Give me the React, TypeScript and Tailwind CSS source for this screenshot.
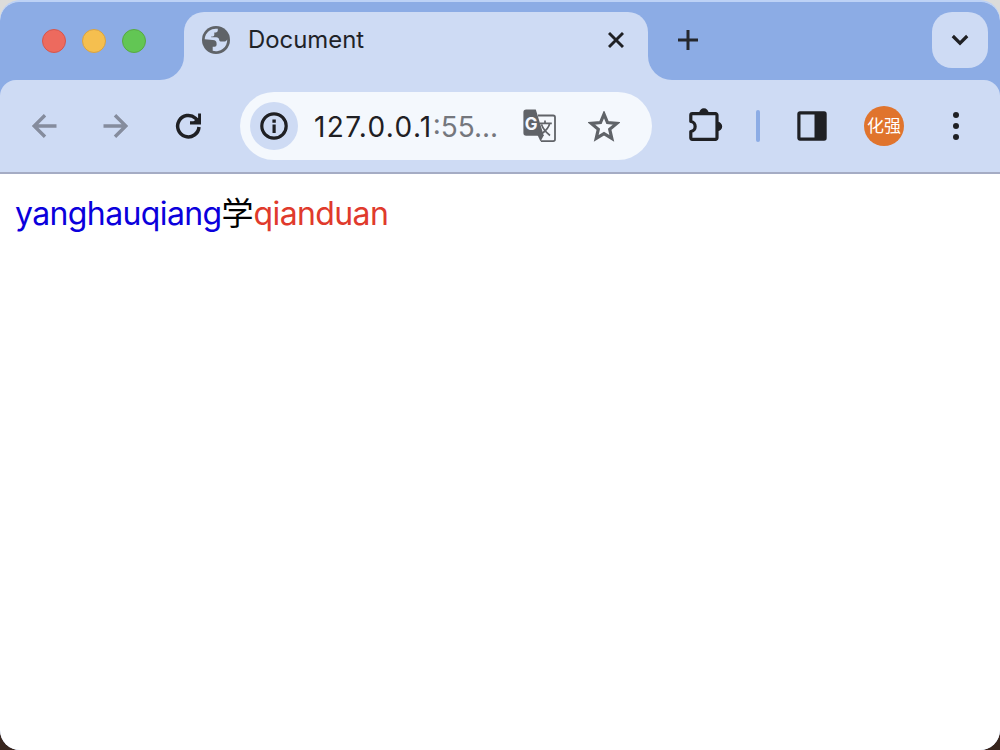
import React from "react";

const GlobeIcon = () => (
  <svg width="28" height="28" viewBox="0 0 28 28">
    <circle cx="14" cy="14" r="14" fill="#5f6368" />
    <path
      d="M2.700 13.200A11.300 11.300 0 0 1 15.800 2.800V4.600a1.800 1.800 0 0 1-1.800 1.800H12.300V9a1.400 1.400 0 0 1-1.400 1.400H9.200v.8H14.200c1.800 0 2.800 1 3 2.800.2 1 1 1.600 2.200 1.600h2.200c1.600 0 2.800-.7 3.600-2.200A11.300 11.300 0 0 1 10.700 24.800V20.800H12.600a2 2 0 0 0 2-2V17.700a3.700 3.700 0 0 0-3.700-3.700z"
      fill="#cfdcf5"
    />
  </svg>
);

const TrafficLights = () => (
  <div className="flex gap-4">
    <span className="size-6 rounded-full border border-[#d5564c] bg-[#ed6a5e]" />
    <span className="size-6 rounded-full border border-[#d8a243] bg-[#f5bf4f]" />
    <span className="size-6 rounded-full border border-[#58a942] bg-[#62c654]" />
  </div>
);

const TabStrip = () => (
  <div className="flex h-[78px] shrink-0 bg-[#cedbf4]">
    <div className="flex w-[184px] items-center rounded-br-3xl bg-[#8cace5] pl-[42px]">
      <TrafficLights />
    </div>
    <div className="w-[464px] bg-[#8cace5] pt-2.5">
      <div className="flex h-full items-start rounded-t-[20px] bg-[#cedbf4] pt-3.5 pr-6 pl-[18px]">
        <GlobeIcon />
        <span className="ml-[18px] text-[23.9px] leading-7 text-[#1f2328]">Document</span>
        <svg className="ml-auto mt-1.5" width="16" height="16" viewBox="0 0 16 16" stroke="#1f2024" strokeWidth="2.9">
          <path d="M1 1l14 14M15 1L1 15" />
        </svg>
      </div>
    </div>
    <div className="flex flex-1 items-start rounded-bl-3xl bg-[#8cace5] pt-2.5 pr-3 pl-[30px]">
      <svg className="mt-[18px]" width="20" height="20" viewBox="0 0 20 20" stroke="#24272d" strokeWidth="3">
        <path d="M0 10h20M10 0v20" />
      </svg>
      <div className="ml-auto flex size-14 items-center justify-center rounded-[20px] bg-[#cedbf4]">
        <svg width="18" height="12" viewBox="0 0 18 12" fill="none" stroke="#1f2024" strokeWidth="3.2">
          <path d="M1.800 2l7.200 7.200L16.200 2" />
        </svg>
      </div>
    </div>
  </div>
);

const TranslateIcon = () => (
  <svg width="34" height="34" viewBox="0 0 34 34">
    <path d="M15 6.500h15.200a1.800 1.800 0 0 1 1.800 1.800v22a1.800 1.800 0 0 1-1.800 1.800H18" fill="none" stroke="#606368" strokeWidth="1.800" />
    <path d="M3.200.6h9.600l8 26.200H3.200A2.800 2.800 0 0 1 .4 24V3.400A2.800 2.800 0 0 1 3.200.6z" fill="#606368" />
    <path d="M14.500 26h6.500l-3.500 6.500z" fill="#606368" />
    <path d="M16.800 14.300h12M22 11.500v2.800M26.800 14.300c-1 4-4 7.500-7.500 10M18.500 15.500c1.500 4.300 4.500 7.800 8.500 11" fill="none" stroke="#606368" strokeWidth="1.700" />
    <text x="1.800" y="20.600" fontSize="17" fontWeight="700" fill="#f5f8fe" fontFamily="Inter, sans-serif">G</text>
  </svg>
);

const AddressBar = () => (
  <div className="ml-[38px] flex h-[68px] w-[412px] items-center rounded-full bg-[#f4f8fd] pl-2.5">
    <div className="flex size-12 items-center justify-center rounded-full bg-[#cedbf4]">
      <svg width="28" height="28" viewBox="0 0 28 28">
        <circle cx="14" cy="14" r="12.200" fill="none" stroke="#1f2024" strokeWidth="3.200" />
        <path d="M12.500 12.500h3.200v8.500h-3.200zM12.400 7.500h3.400v3.300h-3.400z" fill="#1f2024" />
      </svg>
    </div>
    <span className="ml-4 w-[185px] pt-px text-[28px] leading-8 whitespace-nowrap text-[#1f2024]">
      <span className="tracking-[1.35px]">127.0.0.1</span>
      <span className="text-[#74777d]">:55...</span>
    </span>
    <span className="ml-6">
      <TranslateIcon />
    </span>
    <svg className="ml-[31px]" width="32" height="31" viewBox="0 0 32 31" fill="none" stroke="#5f6368" strokeWidth="3.200">
      <path d="M16 3.200l3.500 8.400 9.200.8-7 6 2.100 9-7.800-4.800-7.800 4.800 2.100-9-7-6 9.200-.8z" />
    </svg>
  </div>
);

const Toolbar = () => (
  <div className="shrink-0 bg-[#8cace5]">
    <div className="flex h-[94px] items-center rounded-t-2xl border-b-2 border-[#a5acc4] bg-[#cedbf4] pl-8">
      <svg width="25" height="24" viewBox="0 0 25 24" fill="none" stroke="#858c9d" strokeWidth="3.400">
        <path d="M24.500 12H2M13 1.200L2.200 12 13 22.800" />
      </svg>
      <svg className="ml-[46px]" width="25" height="24" viewBox="0 0 25 24" fill="none" stroke="#858c9d" strokeWidth="3.400">
        <path d="M.5 12H23M12 1.200L22.800 12 12 22.800" />
      </svg>
      <svg className="ml-[47px]" width="27" height="26" viewBox="0 0 27 26" fill="none" stroke="#1f2024" strokeWidth="3.500">
        <path d="M24 14A10.700 10.700 0 1 1 20.500 5.200L23 8" />
        <path d="M23.100 .5H26V11.500H15V8.300H18.500L23.100 5z" fill="#1f2024" stroke="none" />
      </svg>
      <AddressBar />
      <svg className="ml-[37px] -mt-0.5" width="34" height="34" viewBox="0 0 34 34">
        <path d="M3.300 5.700h23.200a1.500 1.500 0 0 1 1.500 1.500v22.600a1.500 1.500 0 0 1-1.500 1.500H3.300a1.500 1.500 0 0 1-1.500-1.500v-6.300c5.800-.6 5.800-9.400 0-10V7.200a1.500 1.500 0 0 1 1.500-1.500z" fill="none" stroke="#1f2024" strokeWidth="3.200" strokeLinejoin="round" />
        <path d="M10.200 5a4.700 4.700 0 0 1 9.400 0zM28.500 13.800a4.700 4.700 0 0 1 0 9.400z" fill="#1f2024" />
      </svg>
      <span className="ml-[33px] h-8 w-1 rounded-full bg-[#8cace5]" />
      <svg className="ml-[37px]" width="30" height="30" viewBox="0 0 30 30">
        <rect x="1.900" y="1.900" width="26.200" height="26.200" rx="1" fill="none" stroke="#1f2024" strokeWidth="3.200" />
        <path d="M17.500 2H28v26H17.500z" fill="#1f2024" />
      </svg>
      <span className="ml-[37px] flex size-10 items-center justify-center rounded-full bg-[#e0742d] text-[17px] leading-none text-white">
        化强
      </span>
      <svg className="ml-[49px]" width="6" height="28" viewBox="0 0 6 28" fill="#1f2024">
        <circle cx="3" cy="3" r="3" />
        <circle cx="3" cy="14" r="3" />
        <circle cx="3" cy="25" r="3" />
      </svg>
    </div>
  </div>
);

export default function App() {
  return (
    <div className="h-[750px] w-[1000px] overflow-hidden bg-linear-to-b from-[#dcdcda] from-50% to-[#38251d] to-50% font-['Inter','Noto_Sans_CJK_SC',sans-serif]">
      <div className="h-full overflow-hidden rounded-[20px] bg-[#bdd2f6] pt-0.5">
        <div className="flex h-full flex-col overflow-hidden rounded-t-[19px] bg-white">
          <TabStrip />
          <Toolbar />
          <main className="px-[15px] pt-5 text-[32px] leading-10 whitespace-nowrap text-black">
            <span className="tracking-[-0.62px] text-[#0b00dc]">yanghauqiang</span>学
            <span className="tracking-[-0.62px] text-[#e03a2c]">qianduan</span>
          </main>
        </div>
      </div>
    </div>
  );
}
